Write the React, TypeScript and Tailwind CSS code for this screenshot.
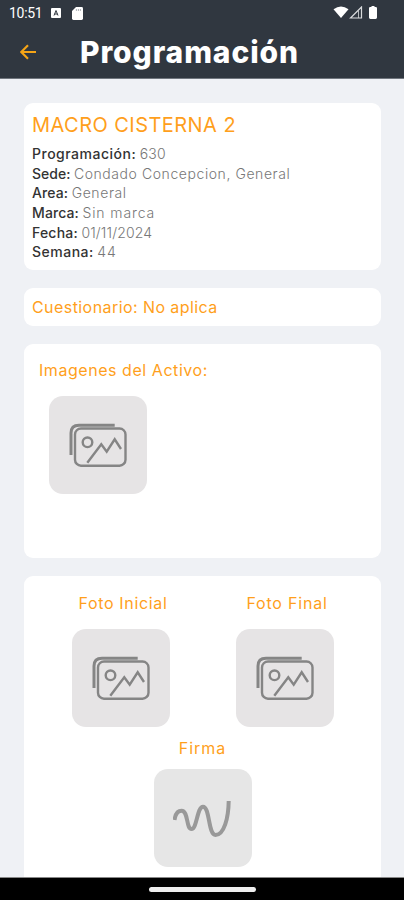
import React from "react";
import clsx from "clsx";

interface Detail {
  label: string;
  value: string;
  labelClass: string;
  valueClass: string;
}

const details: Detail[] = [
  { label: "Programación:", value: "630", labelClass: "tracking-[0.5px]", valueClass: "tracking-[0.2px]" },
  { label: "Sede:", value: "Condado Concepcion, General", labelClass: "tracking-[0px]", valueClass: "tracking-[0.57px]" },
  { label: "Area:", value: "General", labelClass: "tracking-[0.1px]", valueClass: "tracking-[0.6px]" },
  { label: "Marca:", value: "Sin marca", labelClass: "tracking-[0.1px]", valueClass: "tracking-[0.9px]" },
  { label: "Fecha:", value: "01/11/2024", labelClass: "tracking-[0.2px]", valueClass: "tracking-[0.15px]" },
  { label: "Semana:", value: "44", labelClass: "tracking-[0.5px]", valueClass: "tracking-[0.9px]" },
];

const StatusBar = () => (
  <div className="flex h-[26px] items-center pl-[9px] pr-[25px] text-white">
    <span className="w-[34px] whitespace-nowrap font-[Roboto] text-[14px] leading-[26px] tracking-[-0.3px]">10:51</span>
    <svg className="ml-2 h-[10px] w-[10px]" viewBox="0 0 10 10">
      <rect width="10" height="10" rx="1" fill="#fff" />
      <path d="M3 7.5 5 2.5 7 7.5M3.7 6h2.6" fill="none" stroke="#303740" strokeWidth="1" />
    </svg>
    <svg className="ml-[11px] h-[13px] w-[11px]" viewBox="0 0 11 13">
      <path d="M4 0H9.6Q11 0 11 1.4V11.6Q11 13 9.6 13H1.4Q0 13 0 11.6V4Z" fill="#fff" />
      <path d="M4.4 2v2M6.4 2v2M8.4 2v2" stroke="#9ca0a5" strokeWidth=".8" />
    </svg>
    <svg className="ml-auto h-[14px] w-[46px]" viewBox="0 0 46 14">
      <path d="M.5 3.200Q8 -2.200 15.500 3.200L8 12Z" fill="#fff" />
      <path d="M17.500 12 28.500 1V12Z" fill="none" stroke="#d9dbdd" strokeWidth="1.200" />
      <path d="M25.500 4.500V12" fill="none" stroke="#d9dbdd" strokeWidth=".8" />
      <path d="M38.500 0h3v1h1.300Q44 1 44 2.200V11.600Q44 13 42.600 13H37.400Q36 13 36 11.600V2.200Q36 1 37.200 1H38.500Z" fill="#fff" />
    </svg>
  </div>
);

const Header = () => (
  <header className="h-[79px] shrink-0 border-b border-[#70767e] bg-[#303740]">
    <StatusBar />
    <div className="flex h-[52px] items-center">
      <button className="ml-5 h-4 w-4" aria-label="Volver">
        <svg className="h-4 w-4" viewBox="0 0 16 16" fill="none" stroke="#f5a416" strokeWidth="2.200">
          <path d="M16 8H1.600M8 1.200 1.200 8 8 14.800" />
        </svg>
      </button>
      <h1 className="ml-[44px] whitespace-nowrap text-[30px] font-extrabold leading-[52px] tracking-[0.9px] text-white">
        Programación
      </h1>
    </div>
  </header>
);

const ImagePlaceholder = () => (
  <div className="flex h-[98px] w-[98px] items-center justify-center rounded-[14px] bg-[#e6e4e5]">
    <svg className="h-[46px] w-[60px]" viewBox="0 0 60 46" fill="none" stroke="#858585" strokeWidth="2.400">
      <path d="M3 33V11Q3 3.200 11 3.200H46.700" strokeWidth="3" />
      <rect x="7" y="6.500" width="50.500" height="37.200" rx="6" />
      <circle cx="19.500" cy="20.300" r="4.800" />
      <path d="M19.300 40.700 33.300 22.300 38.700 29.700 46.700 17.300 53 27" />
    </svg>
  </div>
);

const SignaturePlaceholder = () => (
  <div className="flex h-[98px] w-[98px] items-center justify-center rounded-[14px] bg-[#e6e6e6]">
    <svg className="h-[40px] w-[60px]" viewBox="0 0 60 40" fill="none" stroke="#999" strokeWidth="4">
      <path d="M1.500 22C2.500 15 5 12.700 8.500 12.700C15.500 12.700 13 31 18.500 31C24 31 24 8.700 30 8.700C37 8.700 35 37 42.500 37C51 37 55.500 20 55.700 3" />
    </svg>
  </div>
);

interface CardProps {
  className?: string;
  children: React.ReactNode;
}

const Card = ({ className, children }: CardProps) => (
  <section className={clsx("w-[357px] shrink-0 rounded-[9px] bg-white", className)}>{children}</section>
);

const App = () => {
  return (
    <div className="flex h-[900px] w-[404px] flex-col overflow-hidden bg-[#eff1f5] font-[Inter,sans-serif]">
      <Header />
      <main className="flex min-h-0 flex-1 flex-col gap-[18px] overflow-hidden pl-6 pt-6">
        <Card className="h-[167px] px-2 pt-2">
          <h2 className="whitespace-nowrap text-[20px] leading-[28px] tracking-[0.45px] text-[#ff9f1c]">MACRO CISTERNA 2</h2>
          <div className="mt-[5px]">
            {details.map((item) => (
              <p key={item.label} className="flex h-[19.700px] gap-[3.500px] whitespace-nowrap text-[14px] leading-[20px]">
                <span className={clsx("font-medium text-[#333]", item.labelClass)}>{item.label}</span>
                <span className={clsx("font-light text-[#777]", item.valueClass)}>{item.value}</span>
              </p>
            ))}
          </div>
        </Card>

        <Card className="flex h-[38px] items-center px-2">
          <p className="whitespace-nowrap text-[16px] tracking-[0.43px] text-[#ff9f1c]">Cuestionario: No aplica</p>
        </Card>

        <Card className="h-[214px] px-[15px] pt-[14px]">
          <h3 className="whitespace-nowrap text-[16px] leading-6 tracking-[0.55px] text-[#ff9f1c]">Imagenes del Activo:</h3>
          <div className="ml-[10px] mt-[14px]">
            <ImagePlaceholder />
          </div>
        </Card>

        <Card className="h-[320px] pt-[15px]">
          <div className="flex gap-[66px] pl-[48px]">
            <div className="flex w-[98px] flex-col items-center gap-[14px]">
              <h3 className="ml-[4px] whitespace-nowrap text-[16px] leading-6 tracking-[0.65px] text-[#ff9f1c]">Foto Inicial</h3>
              <ImagePlaceholder />
            </div>
            <div className="flex w-[98px] flex-col items-center gap-[14px]">
              <h3 className="ml-[4px] whitespace-nowrap text-[16px] leading-6 tracking-[0.8px] text-[#ff9f1c]">Foto Final</h3>
              <ImagePlaceholder />
            </div>
          </div>
          <div className="mt-[9px] flex flex-col items-center gap-[9px]">
            <h3 className="whitespace-nowrap text-[16px] leading-6 tracking-[1px] text-[#ff9f1c]">Firma</h3>
            <SignaturePlaceholder />
          </div>
        </Card>
      </main>
      <footer className="flex h-[23px] shrink-0 justify-center border-t border-[#888] bg-black pt-[9px]">
        <div className="h-[5px] w-[107px] rounded-full bg-[#eee]" />
      </footer>
    </div>
  );
};

export default App;
